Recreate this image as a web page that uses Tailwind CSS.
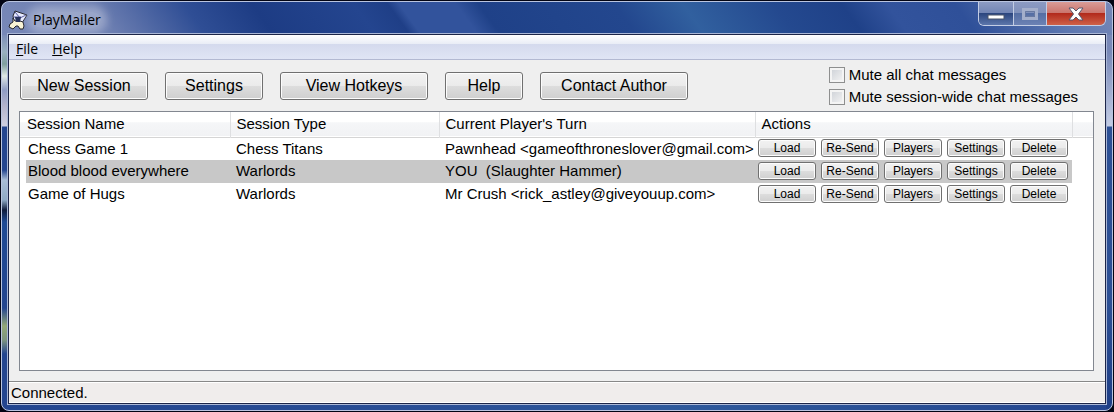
<!DOCTYPE html>
<html lang="en"><head><meta charset="utf-8"><title>PlayMailer</title>
<script src="https://cdn.jsdelivr.net/npm/@tailwindcss/browser@4"></script></head>
<body class="font-['Liberation_Sans',sans-serif] text-[15px] text-black">
<div class="flex h-screen flex-col bg-[#030514]">
<div class="m-px flex flex-1 flex-col rounded-lg border border-[#b9c4df] bg-[#23458f] bg-[linear-gradient(54deg,#7888b7_0,#6c7eb1_10%,#2f4e95_18%,#1d3c84_24%,#24458f_33%,#1f3f87_36%,#32539c_37%,#32539c_42%,#1f4188_44%,#23478e_56%,#31609f_62%,#24498f_70%,#1f4188_76%,#32539c_80%,#2f5099_86%,#5b76b0_94%,#7888b7_100%),linear-gradient(#7888b7_0,#7888b7_30px,#9ab0c0_50px,#7f9f9f_62px,#dfe8e6_74px,#8f9cc4_88px,#b4b4cc_104px,#cfcfe0_124px,#24458f_125px,#24458f_168px,#a9bdd6_178px,#8fa9c4_198px,#101c3c_208px,#1f4a94_220px,#24458f_306px,#93a878_324px,#7d9480_338px,#24458f_352px),linear-gradient(#7888b7_0,#7888b7_50px,#c3cce4_124px,#2d5095_125px,#2d5095_300px,#1f3f87_400px),linear-gradient(90deg,#23458f_0,#2a4f96_40%,#2f5a9c_60%,#24458f_100%)] bg-[size:100%_33px,6px_100%,6px_100%,100%_100%] bg-[position:0_0,0_0,100%_0,0_0] bg-no-repeat px-[6px] pb-[6px]">
<header class="flex h-8 items-center">
<svg class="mt-1 size-5" viewBox="0 0 20 20"><path d="M5 6 7 1 19 5 14 13 6 11Z" fill="#e8ebff" stroke="#24242c"/><path d="m7 2 5 6 6-3M6 7h7" fill="none" stroke="#52569a"/><path d="m5 8 2 3h5l3 1 1 4-1 3h-3l-2-3H8l-3 3-4-2 1-3 3-2Z" fill="#f8f3d5" stroke="#24242c"/><path d="M7 7h6l-1 5H8Z" fill="#26315b"/></svg>
<h1 class="ml-[5px] mt-1 rounded-full bg-white/30 font-['Open_Sans',sans-serif] text-sm leading-4 shadow-[0_0_8px_6px_#ffffff4d]">PlayMailer</h1>
<div class="ml-auto flex h-6 self-start overflow-hidden rounded-b-md border border-t-0 border-[#c3cde4]">
<button aria-label="Minimize" class="w-[35px] border-r border-[#c3cde4] bg-[linear-gradient(#8c9bc3,#7184b3_50%,#2c467f_50%,#5c76ab)]"><svg class="mx-auto" width="18" height="12" viewBox="0 0 18 12"><rect x="1" y="7" width="16" height="4" fill="#fff" stroke="#4b556b"/></svg></button>
<button aria-label="Maximize" class="w-[33px] border-r border-[#c3cde4] bg-[linear-gradient(#8c9bc3,#7f90ba_50%,#556ea3_50%,#6c82b4)]"><svg class="mx-auto" width="18" height="14" viewBox="0 0 18 14"><path d="M2.500 2.500h13v9h-13Z" fill="none" stroke="#a4afcb" stroke-width="3"/><path d="M4.500 4.500h9v5h-9Z" fill="none" stroke="#6879a1"/></svg></button>
<button aria-label="Close" class="w-[58px] bg-[linear-gradient(#d99c97,#c9736b_50%,#b22a1c_50%,#cf6148)]"><svg class="mx-auto" width="18" height="16" viewBox="0 0 18 16"><path d="M2 2h4l3 3 3-3h4l-4.500 6L16 14h-4l-3-3-3 3H2l4.500-6Z" fill="#fff" stroke="#55566c"/></svg></button>
</div></header>
<main class="flex flex-1 flex-col border border-[#1c2548] bg-[#efefef] outline outline-[#aab7d6]">
<nav class="flex h-[25px] gap-[14px] border-b border-[#b3b9d2] bg-[linear-gradient(#fff_0,#e9edf6_9px,#d4daed_9px,#e0e5f5)] px-[7px] pt-1 font-['Open_Sans',sans-serif] text-sm leading-5"><a href="#"><u>F</u>ile</a><a href="#"><u>H</u>elp</a></nav>
<section class="flex px-[11px] pt-3">
<div class="flex h-7 gap-[17px] text-base [&>button]:rounded-[3px] [&>button]:border [&>button]:border-[#707070] [&>button]:bg-[linear-gradient(#f2f2f2,#ebebeb_48%,#dddddd_50%,#cfcfcf)] [&>button]:shadow-[inset_0_0_0_1px_#fcfcfc]">
<button class="w-32">New Session</button><button class="w-[98px]">Settings</button><button class="w-[148px]">View Hotkeys</button><button class="w-[78px]">Help</button><button class="w-[148px]">Contact Author</button></div>
<div class="-mt-2 mr-4 ml-auto flex flex-col [&_input]:size-4 [&_input]:appearance-none [&_input]:border [&_input]:border-[#8e8f8f] [&_input]:bg-[linear-gradient(135deg,#cbcfd5,#f6f6f6)] [&_input]:shadow-[inset_0_0_0_2px_#f4f4f4] [&>label]:flex [&>label]:h-[22px] [&>label]:items-center [&>label]:gap-1">
<label><input type="checkbox">Mute all chat messages</label><label><input type="checkbox">Mute session-wide chat messages</label></div>
</section>
<section class="mt-[3px] mr-[11px] mb-[10px] ml-[10px] flex-1 border border-[#828790] bg-white">
<table class="w-full table-fixed border-collapse text-left [&_tbody_tr]:h-[23px] [&_td]:p-0 [&_td]:whitespace-pre [&_td_button]:h-[18px] [&_td_button]:w-[58px] [&_td_button]:rounded-[3px] [&_td_button]:border [&_td_button]:border-[#707070] [&_td_button]:bg-[linear-gradient(#f2f2f2,#ebebeb_48%,#dddddd_50%,#cfcfcf)] [&_td_button]:text-xs [&_td_button]:leading-4 [&_td_button]:shadow-[inset_0_0_0_1px_#fcfcfc]">
<colgroup><col class="w-[6px]"><col class="w-[204px]"><col class="w-[209px]"><col class="w-[316px]"><col class="w-[317px]"><col></colgroup>
<thead><tr class="h-[25px] border-b border-[#d5d5d5] bg-[linear-gradient(#fff_40%,#f5f6f8_45%,#f1f2f4)] [&>th]:p-0 [&>th]:font-normal"><th colspan="2" class="border-r border-[#dedfe1]"><span class="pl-[7px]">Session Name</span></th><th class="border-r border-[#dedfe1]"><span class="pl-[6px]">Session Type</span></th><th class="border-r border-[#dedfe1]"><span class="pl-[6px]">Current Player's Turn</span></th><th class="border-r border-[#dedfe1]"><span class="pl-[6px]">Actions</span></th><th></th></tr></thead>
<tbody>
<tr><td></td><td><span class="pl-[2px]">Chess Game 1</span></td><td><span class="pl-[6px]">Chess Titans</span></td><td><span class="pl-[6px]">Pawnhead &lt;gameofthroneslover@gmail.com&gt;</span></td><td><div class="flex gap-[5px] pb-[2px] pl-[3px]"><button>Load</button><button>Re-Send</button><button>Players</button><button>Settings</button><button>Delete</button></div></td><td></td></tr>
<tr class="[&>td:not(:first-child):not(:last-child)]:bg-[#c8c8c8]"><td></td><td><span class="pl-[2px]">Blood blood everywhere</span></td><td><span class="pl-[6px]">Warlords</span></td><td><span class="pl-[6px]">YOU  (Slaughter Hammer)</span></td><td><div class="flex gap-[5px] pb-[2px] pl-[3px]"><button>Load</button><button>Re-Send</button><button>Players</button><button>Settings</button><button>Delete</button></div></td><td></td></tr>
<tr><td></td><td><span class="pl-[2px]">Game of Hugs</span></td><td><span class="pl-[6px]">Warlords</span></td><td><span class="pl-[6px]">Mr Crush &lt;rick_astley@giveyouup.com&gt;</span></td><td><div class="flex gap-[5px] pb-[2px] pl-[3px]"><button>Load</button><button>Re-Send</button><button>Players</button><button>Settings</button><button>Delete</button></div></td><td></td></tr>
</tbody></table></section>
<footer class="h-[22px] border-t border-[#888] bg-[#f0edec] px-[2px] leading-[22px] shadow-[inset_0_1px_#fff,inset_0_-1px_#fff]">Connected.</footer>
</main></div></div></body></html>
